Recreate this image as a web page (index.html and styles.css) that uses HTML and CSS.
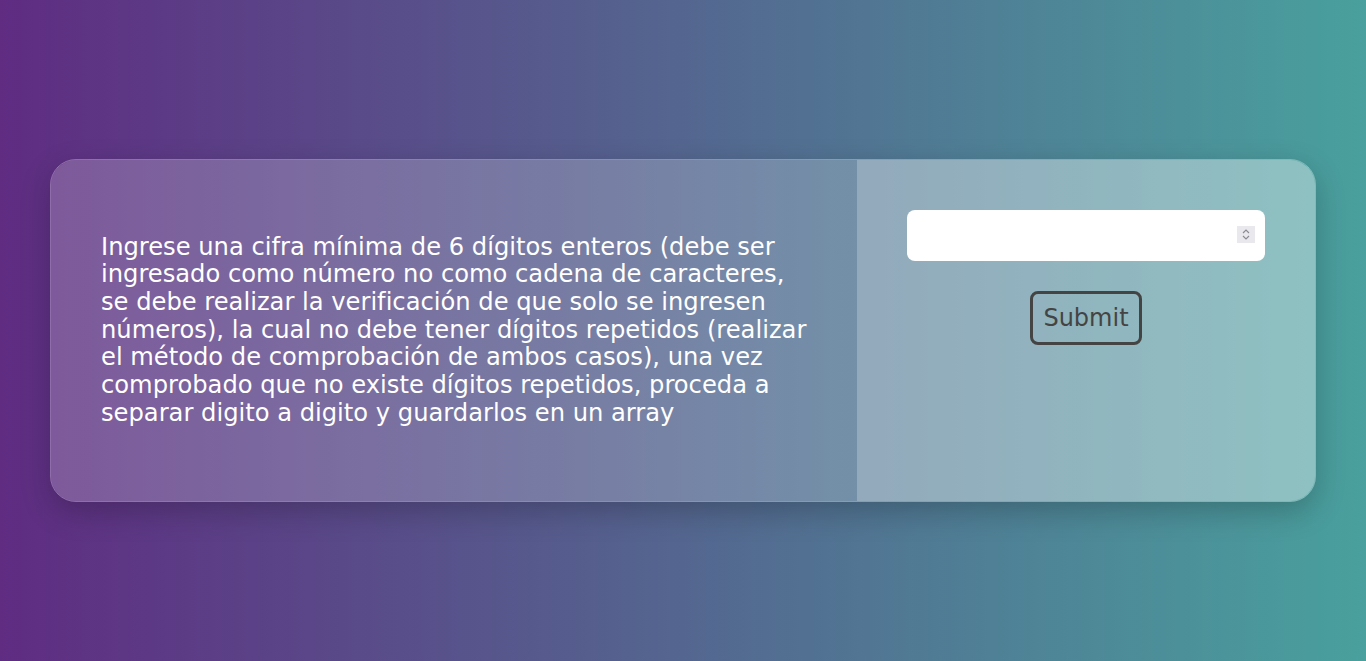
FILE: index.html
```html
<!DOCTYPE html>
<html lang="es">
<head>
<meta charset="utf-8">
<title>Dígitos</title>
<link rel="stylesheet" href="styles.css">
</head>
<body>
<main class="card">
  <section class="info">
    <p class="prompt">Ingrese una cifra mínima de 6 dígitos enteros (debe ser ingresado como número no como cadena de caracteres, se debe realizar la verificación de que solo se ingresen números), la cual no debe tener dígitos repetidos (realizar el método de comprobación de ambos casos), una vez comprobado que no existe dígitos repetidos, proceda a separar digito a digito y guardarlos en un array</p>
  </section>
  <form class="entry">
    <div class="field">
      <input class="number" type="number">
      <span class="spin" aria-hidden="true">
        <svg width="18" height="17" viewBox="0 0 18 17">
          <path d="M6 7 L9 4 L12 7" fill="none" stroke="#8b8b94" stroke-width="1.2"/>
          <path d="M6 10 L9 13 L12 10" fill="none" stroke="#8b8b94" stroke-width="1.2"/>
        </svg>
      </span>
    </div>
    <button class="submit" type="button">Submit</button>
  </form>
</main>
</body>
</html>
```
FILE: styles.css
```css
html, body {
  margin: 0;
  height: 100%;
}
body {
  background: linear-gradient(to right, #5f2c82, #49a09d);
  font-family: "DejaVu Sans", Verdana, sans-serif;
  display: flex;
  align-items: center;
  padding: 0 50px;
  box-sizing: border-box;
}
.card {
  flex: 1;
  height: 343px;
  box-sizing: border-box;
  display: grid;
  grid-template-columns: 806px 1fr;
  border: 1px solid rgba(255, 255, 255, 0.3);
  border-radius: 26px;
  overflow: hidden;
  box-shadow: 0 10px 30px rgba(0, 0, 0, 0.22);
}
.info {
  background: rgba(255, 255, 255, 0.2);
  display: flex;
  align-items: center;
  padding: 0 30px 0 50px;
}
.prompt {
  margin: 0;
  color: #fff;
  font-size: 24.2px;
  line-height: 27.7px;
  max-width: 712px;
}
.entry {
  background: rgba(255, 255, 255, 0.38);
  padding: 50px;
  margin: 0;
  display: flex;
  flex-direction: column;
  align-items: center;
  gap: 30px;
}
.field {
  align-self: stretch;
  position: relative;
}
.number {
  display: block;
  width: 100%;
  height: 51px;
  box-sizing: border-box;
  border: none;
  border-radius: 8px;
  background: #fff;
  padding: 0 10px;
  font-size: 20px;
  font-family: inherit;
  -moz-appearance: textfield;
}
.number::-webkit-inner-spin-button,
.number::-webkit-outer-spin-button {
  -webkit-appearance: none;
  margin: 0;
}
.spin {
  position: absolute;
  right: 10px;
  top: 16px;
  width: 18px;
  height: 17px;
  background: #e9e9ed;
  display: block;
}
.spin svg {
  display: block;
}
.submit {
  background: transparent;
  border: 3px solid #444;
  border-radius: 8px;
  padding: 10px;
  color: #444;
  font-family: inherit;
  font-size: 24px;
  line-height: 28px;
}
```
